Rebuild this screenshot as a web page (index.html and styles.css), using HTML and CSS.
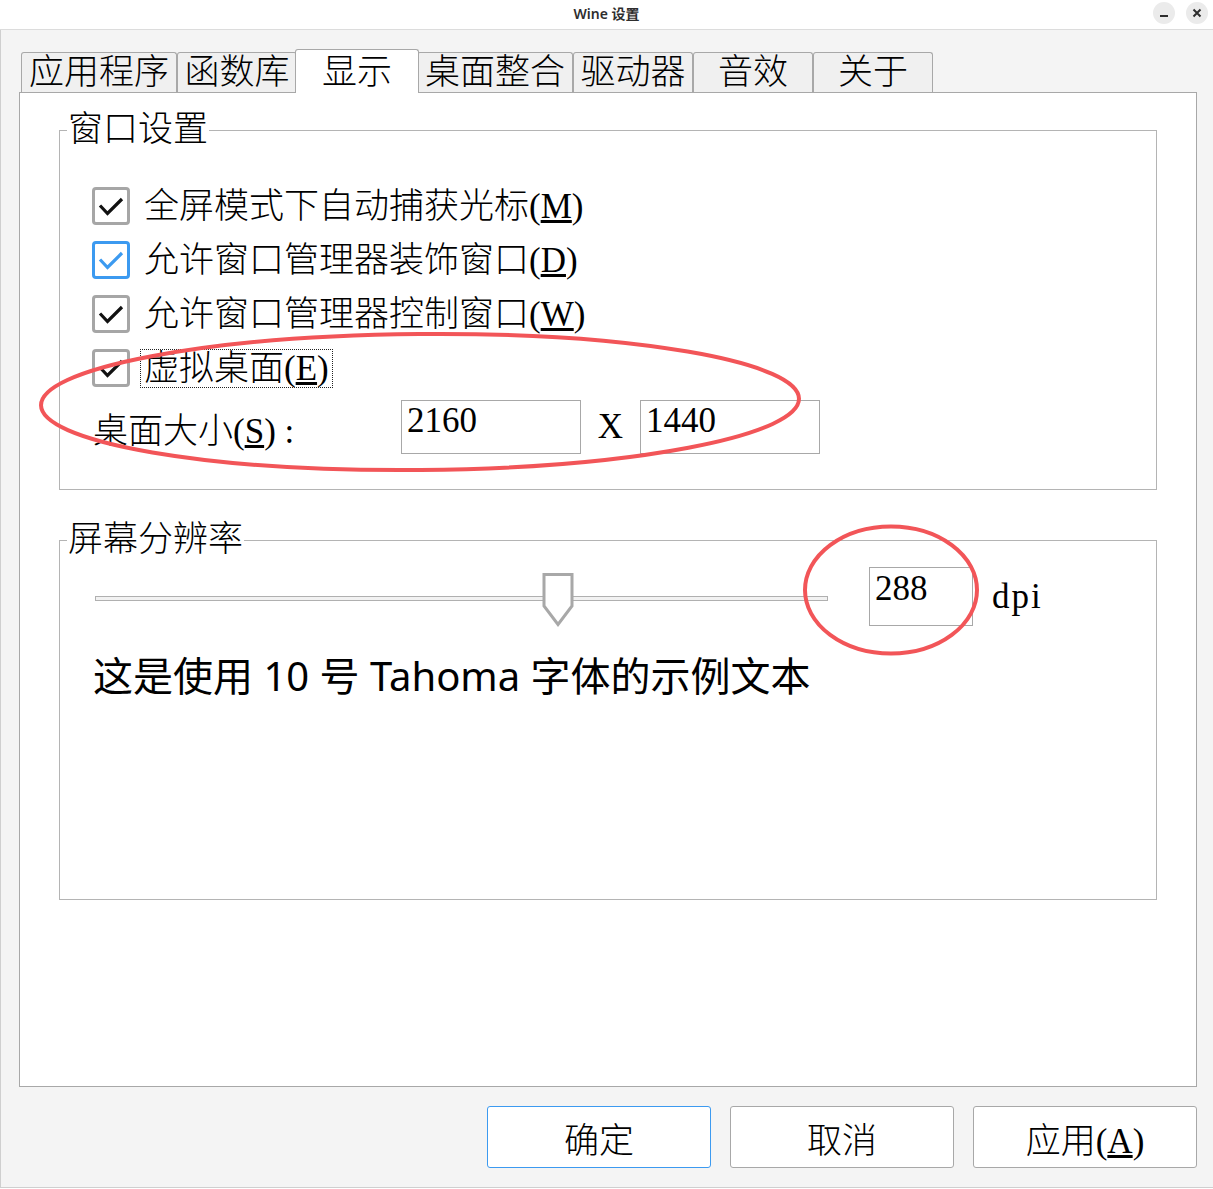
FILE: index.html
```html
<!doctype html>
<html lang="zh-CN">
<head>
  <meta charset="utf-8">
  <meta name="viewport" content="width=device-width, initial-scale=1.0" />
  <title>Wine 设置</title>
  <link rel="stylesheet" href="styles.css">
</head>
<body>
<div class="window">
  <header class="titlebar">
    <span class="title">Wine 设置</span>
    <div class="controls">
      <span class="ctl">
        <svg width="10" height="10" viewBox="0 0 10 10"><rect x="1" y="7" width="8" height="2" fill="#2e2e2e"/></svg>
      </span>
      <span class="ctl">
        <svg width="10" height="10" viewBox="0 0 10 10"><path d="M1.5 1.5 L8.5 8.5 M8.5 1.5 L1.5 8.5" stroke="#2e2e2e" stroke-width="2"/></svg>
      </span>
    </div>
  </header>

  <main class="body">
    <nav class="tabs">
      <div class="tab wide">应用程序</div>
      <div class="tab">函数库</div>
      <div class="tab active">显示</div>
      <div class="tab wide">桌面整合</div>
      <div class="tab">驱动器</div>
      <div class="tab">音效</div>
      <div class="tab">关于</div>
    </nav>

    <section class="panel">
      <fieldset class="group">
        <legend>窗口设置</legend>
        <div class="group-body window-opts">
          <label class="check-row">
            <span class="box"><svg width="32" height="32" viewBox="0 0 32 32"><polyline points="5,15.5 12.5,23.5 27,9" /></svg></span>
            <span class="text">全屏模式下自动捕获光标(<u>M</u>)</span>
          </label>
          <label class="check-row">
            <span class="box hover"><svg width="32" height="32" viewBox="0 0 32 32"><polyline points="5,15.5 12.5,23.5 27,9" /></svg></span>
            <span class="text">允许窗口管理器装饰窗口(<u>D</u>)</span>
          </label>
          <label class="check-row">
            <span class="box"><svg width="32" height="32" viewBox="0 0 32 32"><polyline points="5,15.5 12.5,23.5 27,9" /></svg></span>
            <span class="text">允许窗口管理器控制窗口(<u>W</u>)</span>
          </label>
          <label class="check-row">
            <span class="box"><svg width="32" height="32" viewBox="0 0 32 32"><polyline points="5,15.5 12.5,23.5 27,9" /></svg></span>
            <span class="text focus">虚拟桌面(<u>E</u>)</span>
          </label>
          <div class="size-row">
            <span class="size-label">桌面大小(<u>S</u>)&nbsp;:</span>
            <span class="field size-field">2160</span>
            <span class="times">X</span>
            <span class="field size-field">1440</span>
          </div>
        </div>
      </fieldset>

      <fieldset class="group second">
        <legend>屏幕分辨率</legend>
        <div class="group-body dpi-opts">
          <div class="dpi-row">
            <div class="slider">
              <div class="track"></div>
              <svg class="thumb" width="32" height="54" viewBox="0 0 32 54"><path d="M2 1.5 H30 V33 L16 51.5 L2 33 Z" /></svg>
            </div>
            <span class="field dpi-field">288</span>
            <span class="unit">dpi</span>
          </div>
          <p class="sample">这是使用 10 号 Tahoma 字体的示例文本</p>
        </div>
      </fieldset>
    </section>

    <div class="actions">
      <button class="btn default">确定</button>
      <button class="btn">取消</button>
      <button class="btn">应用(<u>A</u>)</button>
    </div>
  </main>

  <!-- red annotation marks drawn over the dialog -->
  <svg class="marks" width="1213" height="1189" viewBox="0 0 1213 1189">
    <ellipse cx="420" cy="402" rx="379" ry="68" transform="rotate(-0.5 420 402)" />
    <ellipse cx="891" cy="590" rx="86" ry="63.5" />
  </svg>
</div>
</body>
</html>
```

FILE: styles.css
```css
* {
  box-sizing: border-box;
}
html, body {
  margin: 0;
  background: #fff;
}
.window {
  position: relative;
  width: 1213px;
  height: 1189px;
  font-family: "Liberation Serif", "Noto Sans CJK SC", serif;
  font-weight: 300;
  color: #000;
}

/* title bar */
.titlebar {
  height: 30px;
  padding-bottom: 3px;
  border-bottom: 1px solid #dcdcdc;
  background: #fff;
  display: grid;
  grid-template-columns: 1fr auto 1fr;
  align-items: center;
}
.title {
  grid-column: 2;
  font: 600 14px "Noto Sans", "Noto Sans CJK SC", sans-serif;
  color: #2e2e2e;
}
.controls {
  justify-self: end;
  display: flex;
  gap: 11px;
  padding-right: 5px;
}
.ctl {
  width: 22px;
  height: 22px;
  border-radius: 50%;
  background: #ebebeb;
  display: flex;
  align-items: center;
  justify-content: center;
}

/* dialog body */
.body {
  height: 1158px;
  border-left: 1px solid #cfcfcf;
  border-bottom: 1px solid #cfcfcf;
  background: #f4f4f4;
  padding: 19px 0 0 18px;
  display: flex;
  flex-direction: column;
}

.tabs {
  display: flex;
  align-items: flex-end;
  padding-left: 2px;
}
.tab {
  width: 120px;
  height: 40px;
  border: 1px solid #a8a8a8;
  border-bottom: 0;
  border-radius: 3px 3px 0 0;
  background: #f0f0f0;
  font-size: 35px;
  line-height: 39px;
  text-align: center;
  white-space: nowrap;
}
.tab.wide {
  width: 156px;
}
.tab.active {
  width: 124px;
  height: 44px;
  margin: 0 -2px -1px;
  padding-top: 3px;
  background: #fff;
  position: relative;
  z-index: 1;
}

.panel {
  width: 1178px;
  height: 995px;
  border: 1px solid #a8a8a8;
  background: #fff;
  padding: 17px 39px 0;
}

.group {
  margin: 0;
  padding: 0;
  min-width: 0;
  height: 380px;
  border: 1px solid #b4b4b4;
}
.group.second {
  margin-top: 30px;
}
.group legend {
  margin-left: 7px;
  padding: 0 1px;
  font-size: 35px;
  line-height: 40px;
}
.window-opts {
  padding: 29px 0 0 32px;
}
.dpi-opts {
  padding: 7px 0 0 35px;
}

.check-row {
  height: 54px;
  display: flex;
  align-items: center;
}
.box {
  width: 38px;
  height: 38px;
  border: 3px solid #a6a6a6;
  border-radius: 4px;
}
.box svg {
  display: block;
}
.box polyline {
  fill: none;
  stroke: #111;
  stroke-width: 3.2;
}
.box.hover {
  border-color: #3c9af0;
}
.box.hover polyline {
  stroke: #3c9af0;
}
.check-row .text {
  margin-left: 11px;
  padding: 0 3px;
  font-size: 35px;
  line-height: 37px;
}
.text.focus {
  outline: 1px dotted #222;
}

.size-row {
  margin-top: 5px;
  height: 54px;
  display: flex;
  align-items: center;
}
.size-label {
  width: 309px;
  padding-left: 1px;
  font-size: 35px;
}
.field {
  border: 1px solid #a8a8a8;
  font-size: 35px;
  line-height: 40px;
  padding-left: 5px;
}
.size-field {
  width: 180px;
  height: 54px;
}
.times {
  width: 59px;
  text-align: center;
  font-size: 35px;
}

.dpi-row {
  height: 59px;
  display: flex;
  align-items: center;
}
.slider {
  position: relative;
  width: 733px;
  height: 59px;
  display: flex;
  align-items: center;
}
.track {
  width: 100%;
  height: 5px;
  margin-top: 4px;
  border: 1px solid #b0b0b0;
  background: #f2f2f2;
}
.thumb {
  position: absolute;
  top: 6px;
  left: 447px;
}
.thumb path {
  fill: #fff;
  stroke: #a8a8a8;
  stroke-width: 3;
}
.dpi-field {
  width: 104px;
  height: 59px;
  margin-left: 41px;
  padding-top: 1px;
}
.unit {
  margin-left: 19px;
  font-size: 35px;
  line-height: 40px;
  letter-spacing: 2px;
}
.sample {
  margin: 26px 0 0 -2px;
  font-family: "Noto Sans", "Noto Sans CJK SC", sans-serif;
  font-weight: 400;
  font-size: 40px;
  line-height: 48px;
}

.actions {
  width: 1178px;
  margin-top: 19px;
  display: flex;
  justify-content: flex-end;
  gap: 19px;
}
.btn {
  width: 224px;
  height: 62px;
  padding: 0;
  border: 1px solid #a8a8a8;
  border-radius: 3px;
  background: #fff;
  color: #000;
  font-family: "Liberation Serif", "Noto Sans CJK SC", serif;
  font-weight: 300;
  font-size: 35px;
}
.btn.default {
  border-color: #3c9af0;
}

.marks {
  position: absolute;
  top: 0;
  left: 0;
  pointer-events: none;
  z-index: 5;
}
.marks ellipse {
  fill: none;
  stroke: #f25558;
  stroke-width: 4;
}
```
